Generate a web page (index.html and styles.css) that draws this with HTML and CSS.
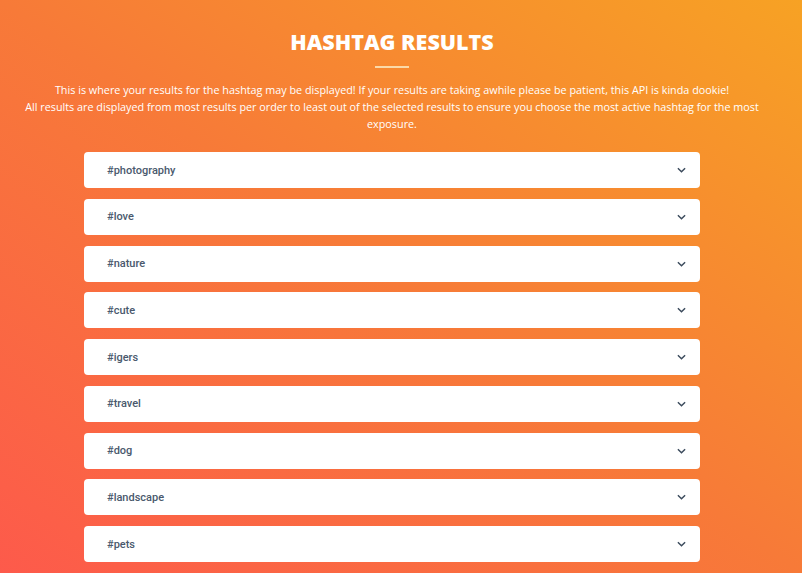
FILE: index.html
```html
<!DOCTYPE html>
<html lang="en">
<head>
<meta charset="utf-8">
<title>Hashtag Results</title>
<link rel="stylesheet" href="styles.css">
</head>
<body>
<main class="page">
  <section class="results">
    <h1 class="title">HASHTAG RESULTS</h1>
    <div class="rule"></div>
    <p class="intro">This is where your results for the hashtag may be displayed! If your results are taking awhile please be patient, this API is kinda dookie!<br>All results are displayed from most results per order to least out of the selected results to ensure you choose the most active hashtag for the most exposure.</p>
    <ul class="list">
      <li class="item"><span>#photography</span><svg class="chev" viewBox="0 0 10 6"><path d="M1 1l4 4 4-4"/></svg></li>
      <li class="item"><span>#love</span><svg class="chev" viewBox="0 0 10 6"><path d="M1 1l4 4 4-4"/></svg></li>
      <li class="item"><span>#nature</span><svg class="chev" viewBox="0 0 10 6"><path d="M1 1l4 4 4-4"/></svg></li>
      <li class="item"><span>#cute</span><svg class="chev" viewBox="0 0 10 6"><path d="M1 1l4 4 4-4"/></svg></li>
      <li class="item"><span>#igers</span><svg class="chev" viewBox="0 0 10 6"><path d="M1 1l4 4 4-4"/></svg></li>
      <li class="item"><span>#travel</span><svg class="chev" viewBox="0 0 10 6"><path d="M1 1l4 4 4-4"/></svg></li>
      <li class="item"><span>#dog</span><svg class="chev" viewBox="0 0 10 6"><path d="M1 1l4 4 4-4"/></svg></li>
      <li class="item"><span>#landscape</span><svg class="chev" viewBox="0 0 10 6"><path d="M1 1l4 4 4-4"/></svg></li>
      <li class="item"><span>#pets</span><svg class="chev" viewBox="0 0 10 6"><path d="M1 1l4 4 4-4"/></svg></li>
    </ul>
  </section>
</main>
</body>
</html>
```

FILE: styles.css
```css
html, body {
  margin: 0;
  padding: 0;
  height: 100%;
  overflow: hidden;
}
body {
  background: linear-gradient(to top right, #fd5a4b 0%, #f77a38 50%, #f7a224 100%);
  font-family: "Open Sans", sans-serif;
}
.page {
  padding: 0 18px 0 0;
}
.results {
  display: flex;
  flex-direction: column;
  align-items: center;
  padding-top: 28px;
}
.title {
  margin: 0;
  font-family: "Open Sans", sans-serif;
  font-weight: 800;
  font-size: 21.5px;
  line-height: 28px;
  color: #fff;
}
.rule {
  width: 34px;
  height: 2px;
  background: #fbd9a8;
  margin-top: 10px;
}
.intro {
  margin: 13px 0 0;
  width: 760px;
  text-align: center;
  color: #fff;
  font-size: 10.8px;
  line-height: 17px;
}
.list {
  list-style: none;
  margin: 20px 0 0;
  padding: 0;
  width: 616px;
  display: flex;
  flex-direction: column;
  gap: 10.75px;
}
.item {
  height: 36px;
  background: #fff;
  border-radius: 4px;
  display: flex;
  align-items: center;
  justify-content: space-between;
  padding: 0 14px 0 23px;
  font-family: Roboto, sans-serif;
  font-weight: 500;
  font-size: 11px;
  color: #4a596d;
}
.chev {
  width: 9px;
  height: 6px;
  fill: none;
  stroke: #3b4a5c;
  stroke-width: 1.6;
}
```
